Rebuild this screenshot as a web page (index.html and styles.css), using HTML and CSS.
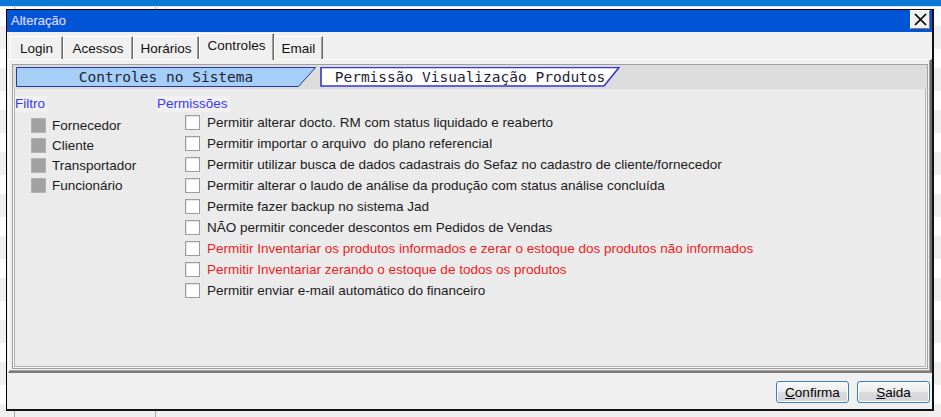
FILE: index.html
```html
<!DOCTYPE html>
<html lang="pt-BR">
<head>
<meta charset="utf-8">
<title>Alteração</title>
<link rel="stylesheet" href="styles.css">
</head>
<body>
<div class="desk">
  <div class="desk-top"></div>
  <div class="desk-rows">
    <div class="dcol c1"></div>
    <div class="dcol c2"></div>
    <div class="dcol c3"></div>
  </div>

  <div class="window">
    <div class="titlebar">
      <span class="title">Alteração</span>
      <button class="close" aria-label="Fechar">
        <svg width="13" height="13" viewBox="0 0 13 13"><path d="M1 1 L12 12 M12 1 L1 12" stroke="#000" stroke-width="1.7" fill="none"/></svg>
      </button>
    </div>

    <div class="tabs">
      <div class="tab w-login">Login</div>
      <div class="tab w-acessos">Acessos</div>
      <div class="tab w-horarios">Horários</div>
      <div class="tab w-controles active">Controles</div>
      <div class="tab w-email">Email</div>
    </div>

    <div class="panel">
      <div class="frame">
        <div class="subtabs">
          <div class="subtab sel">
            <svg class="shape" viewBox="0 0 300 20" preserveAspectRatio="none"><polygon points="0.5,0.5 299.5,0.5 282.5,19.5 0.5,19.5" fill="#a5cff7" stroke="#27389a" stroke-width="1"/></svg>
            <span class="stxt">Controles no Sistema</span>
          </div>
          <div class="subtab">
            <svg class="shape" viewBox="0 0 300 20" preserveAspectRatio="none"><polygon points="1,0.5 299,0.5 284,19 1,19" fill="#ffffff" stroke="#3434d8" stroke-width="1.6"/></svg>
            <span class="stxt">Permissão Visualização Produtos</span>
          </div>
        </div>

        <div class="content">
          <div class="filtro">
            <div class="label">Filtro</div>
            <div class="flist">
              <div class="frow"><span class="sq"></span>Fornecedor</div>
              <div class="frow"><span class="sq"></span>Cliente</div>
              <div class="frow"><span class="sq"></span>Transportador</div>
              <div class="frow"><span class="sq"></span>Funcionário</div>
            </div>
          </div>
          <div class="perms">
            <div class="label">Permissões</div>
            <div class="plist">
              <div class="prow"><span class="cb"></span>Permitir alterar docto. RM com status liquidado e reaberto</div>
              <div class="prow"><span class="cb"></span>Permitir importar o arquivo&nbsp; do plano referencial</div>
              <div class="prow"><span class="cb"></span>Permitir utilizar busca de dados cadastrais do Sefaz no cadastro de cliente/fornecedor</div>
              <div class="prow"><span class="cb"></span>Permitir alterar o laudo de análise da produção com status análise concluída</div>
              <div class="prow"><span class="cb"></span>Permite fazer backup no sistema Jad</div>
              <div class="prow"><span class="cb"></span>NÃO permitir conceder descontos em Pedidos de Vendas</div>
              <div class="prow red"><span class="cb"></span>Permitir Inventariar os produtos informados e zerar o estoque dos produtos não informados</div>
              <div class="prow red"><span class="cb"></span>Permitir Inventariar zerando o estoque de todos os produtos</div>
              <div class="prow"><span class="cb"></span>Permitir enviar e-mail automático do financeiro</div>
            </div>
          </div>
        </div>
      </div>
    </div>

    <div class="footer">
      <button class="btn"><u>C</u>onfirma</button>
      <button class="btn"><u>S</u>aida</button>
    </div>
  </div>
</div>
</body>
</html>
```

FILE: styles.css
```css
* { box-sizing: border-box; }
html, body { margin: 0; padding: 0; }
body {
  width: 941px;
  height: 417px;
  overflow: hidden;
  background: #ffffff;
  font-family: "Liberation Sans", Arial, sans-serif;
  color: #1a1a1a;
}

/* desktop behind the dialog */
.desk {
  position: relative;
  width: 941px;
  height: 417px;
  display: flex;
  flex-direction: column;
}
.desk-top {
  height: 7px;
  background: #0a78d4;
  border-bottom: 1px solid #d6e4f2;
}
.desk-rows {
  flex: 1;
  display: flex;
  background: repeating-linear-gradient(to bottom, #ffffff 0 19px, #efefef 19px 42px);
}
.dcol { height: 100%; }
.c1 { width: 15px; border-right: 1px solid #a8a8a8; }
.c2 { width: 141px; border-right: 1px solid #a8a8a8; }
.c3 { flex: 1; }

/* dialog window */
.window {
  position: absolute;
  left: 6px;
  top: 9px;
  width: 928px;
  height: 402px;
  background: #f0f0f0;
  border-left: 1px solid #000;
  border-top: 1px solid #000;
  border-right: 2px solid #111;
  border-bottom: 2px solid #111;
  display: flex;
  flex-direction: column;
}

.titlebar {
  height: 22px;
  flex: none;
  background: #0054d6;
  display: flex;
  align-items: center;
  padding-left: 4px;
}
.title {
  font-size: 13px;
  color: #d3d6ff;
  text-shadow: 0 0 1px #7f8cf0;
  line-height: 16px;
}
.close {
  margin-left: auto;
  margin-right: 2px;
  align-self: flex-start;
  width: 20px;
  height: 19px;
  padding: 0;
  background: #f0f0f0;
  border-top: 1px solid #ffffff;
  border-left: 1px solid #ffffff;
  border-right: 1px solid #7a7a7a;
  border-bottom: 1px solid #7a7a7a;
  display: flex;
  align-items: center;
  justify-content: center;
}

/* main tabs */
.tabs {
  height: 27px;
  flex: none;
  display: flex;
  align-items: flex-end;
  padding-left: 3px;
  position: relative;
  z-index: 2;
}
.tab {
  height: 23px;
  font-size: 13.5px;
  color: #111;
  display: flex;
  align-items: center;
  justify-content: center;
  background: #f0f0f0;
  border-left: 1px solid #ffffff;
  border-top: 1px solid #ffffff;
  border-right: 1px solid #6a6a6a;
  box-shadow: inset -1px 0 0 #a0a0a0;
  padding-top: 1px;
}
.tab.active {
  height: 27px;
  margin-bottom: -1px;
  padding-bottom: 4px;
}
.w-login { width: 53px; }
.w-acessos { width: 70px; }
.w-horarios { width: 66px; }
.w-controles { width: 75px; }
.w-email { width: 49px; }

/* tab panel */
.panel {
  height: 314px;
  flex: none;
  margin-left: 1px;
  border-top: 1px solid #ffffff;
  border-left: 1px solid #ffffff;
  border-right: 2px solid #6a6a6a;
  border-bottom: 2px solid #7a7a7a;
  box-shadow: inset -1px -1px 0 #a0a0a0;
  padding: 4px 2px 2px 3px;
  display: flex;
}
.frame {
  flex: 1;
  background: #ebebeb;
  border: 1px solid #a0a0a0;
  box-shadow: inset 0 0 0 1px #f6f6f6, inset 0 0 0 2px #b4b4b4;
  display: flex;
  flex-direction: column;
}

.subtabs {
  height: 24px;
  flex: none;
  background: #dcdcdc;
  display: flex;
  gap: 4px;
  padding: 2px 0 0 3px;
}
.subtab {
  position: relative;
  width: 300px;
  height: 20px;
  display: flex;
  align-items: center;
  justify-content: center;
}
.shape {
  position: absolute;
  left: 0;
  top: 0;
  width: 100%;
  height: 100%;
}
.stxt {
  position: relative;
  font-family: "DejaVu Sans Mono", "Liberation Mono", monospace;
  font-size: 14.5px;
  color: #1e1e38;
  line-height: 16px;
  white-space: pre;
}

.content {
  flex: 1;
  display: flex;
  padding: 7px 0 0 2px;
  font-size: 13.5px;
}
.filtro { width: 142px; }
.label {
  display: inline-block;
  height: 16px;
  line-height: 16px;
  color: #3838ff;
  background: #f1f1f1;
  padding-right: 2px;
}
.flist { margin-top: 3px; }
.frow {
  height: 20px;
  display: flex;
  align-items: center;
  gap: 6px;
  padding-left: 16px;
}
.sq {
  width: 15px;
  height: 15px;
  background: #a2a2a2;
  border: 1px solid #b2b2b2;
  flex: none;
}
.plist { }
.prow {
  height: 21px;
  display: flex;
  align-items: center;
  gap: 7px;
  padding-left: 28px;
  white-space: nowrap;
}
.prow.red { color: #ee1c1c; }
.cb {
  width: 15px;
  height: 15px;
  flex: none;
  background: #ffffff;
  border: 1px solid #9c9c9c;
  box-shadow: inset 1px 1px 0 #e6e6e6;
}

/* footer buttons */
.footer {
  flex: 1;
  display: flex;
  justify-content: flex-end;
  align-items: flex-start;
  gap: 8px;
  padding: 8px 2px 0 0;
}
.btn {
  width: 73px;
  height: 22px;
  padding: 0;
  font-family: "Liberation Sans", Arial, sans-serif;
  font-size: 13.5px;
  color: #000;
  border: 1px solid #3c7fb1;
  border-radius: 3px;
  background: linear-gradient(to bottom, #f7f7f7 0%, #ececec 50%, #dcdcdc 51%, #d2d4da 100%);
  box-shadow: inset 0 0 0 1px #fbfbfb;
}
.btn u { text-decoration: underline; }
```
